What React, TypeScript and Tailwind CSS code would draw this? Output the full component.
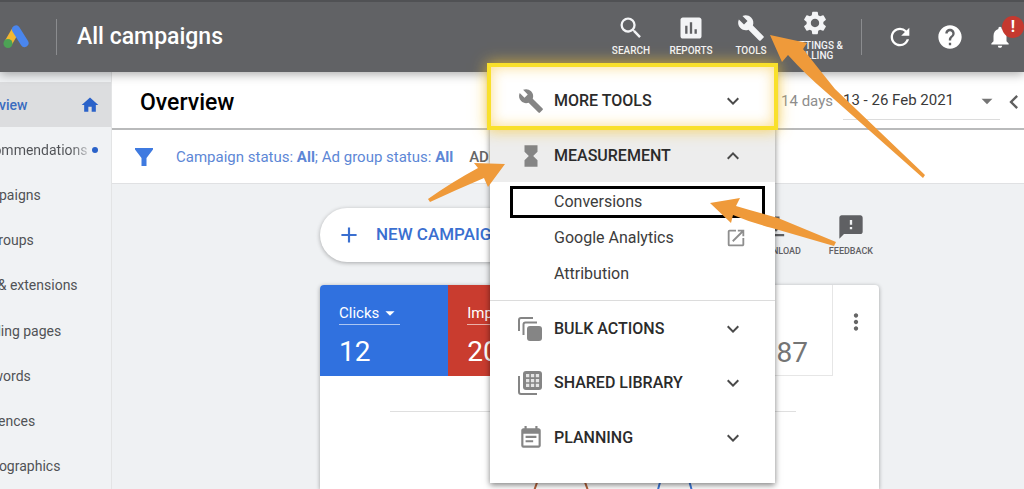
import type { ReactNode } from "react";
import clsx from "clsx";
import {
  MdAdd,
  MdArrowDropDown,
  MdAssessment,
  MdBuild,
  MdChevronLeft,
  MdEventNote,
  MdExpandLess,
  MdExpandMore,
  MdFeedback,
  MdFileDownload,
  MdHelp,
  MdHome,
  MdHourglassFull,
  MdMoreVert,
  MdNotifications,
  MdOpenInNew,
  MdRefresh,
  MdSearch,
  MdSettings,
} from "react-icons/md";

const NAV_ITEMS = [
  "Overview",
  "Recommendations",
  "Campaigns",
  "Ad groups",
  "Ads & extensions",
  "Landing pages",
  "Keywords",
  "Audiences",
  "Demographics",
];

function AdsLogo() {
  return (
    <svg width="27" height="26" viewBox="0 0 27 26" fill="none">
      <path d="M5.500 18.500L12.500 6.500" stroke="#f2b731" strokeWidth="8" />
      <path
        d="M13 5.500L21.500 19"
        stroke="#4a86ee"
        strokeWidth="8"
        strokeLinecap="round"
      />
      <circle cx="5" cy="19.500" r="4.500" fill="#4da255" />
    </svg>
  );
}

function FunnelIcon() {
  return (
    <svg width="18" height="18" viewBox="0 0 18 18" fill="#3f7ae0">
      <path d="M0 0h18v1.500L11.500 10v8h-5v-8L0 1.500z" />
    </svg>
  );
}

function StackIcon() {
  return (
    <svg width="24" height="24" viewBox="0 0 24 24" fill="none">
      <path d="M1 14V3a2 2 0 0 1 2-2h12" stroke="currentColor" strokeWidth="2" />
      <path d="M5.500 18V7.500a2 2 0 0 1 2-2H19" stroke="currentColor" strokeWidth="2" />
      <rect x="9" y="9" width="15" height="15" rx="3" fill="currentColor" />
    </svg>
  );
}

function LibraryIcon() {
  return (
    <svg width="24" height="24" viewBox="0 0 24 24" fill="none">
      <path d="M1 5v16a2 2 0 0 0 2 2h16" stroke="currentColor" strokeWidth="2" />
      <rect x="5" y="0" width="19" height="19" rx="3" fill="currentColor" />
      <path
        d="M8 3h3.300v3.300H8zM12.900 3h3.300v3.300h-3.300zM17.800 3h3.300v3.300h-3.300zM8 7.900h3.300v3.300H8zM12.900 7.900h3.300v3.300h-3.300zM17.800 7.900h3.300v3.300h-3.300zM8 12.800h3.300v3.300H8zM12.900 12.800h3.300v3.300h-3.300zM17.800 12.800h3.300v3.300h-3.300z"
        fill="#e4e4e4"
      />
    </svg>
  );
}

interface HeaderToolProps {
  icon: ReactNode;
  label: string;
  className?: string;
}

function HeaderTool({ icon, label, className }: HeaderToolProps) {
  return (
    <button
      className={clsx(
        "flex flex-col items-center gap-1 pb-1 text-[10px] leading-[10px] font-medium text-gray-100",
        className,
      )}
    >
      {icon}
      {label}
    </button>
  );
}

function Header() {
  return (
    <header className="relative z-10 flex h-[72px] items-center border-t-2 border-[#505154] bg-[#616265] text-white shadow-[0_2px_10px_rgba(0,0,0,0.35)]">
      <a href="#home" aria-label="Home" className="ml-[3px]">
        <AdsLogo />
      </a>
      <span className="ml-[26px] h-9 w-px bg-[#8b8c8f]" />
      <h1 className="ml-5 text-[23px] font-medium">All campaigns</h1>

      <div className="ml-auto flex h-full items-center">
        <HeaderTool className="w-[60px]" icon={<MdSearch size={28} />} label="SEARCH" />
        <HeaderTool className="w-[60px]" icon={<MdAssessment size={28} />} label="REPORTS" />
        <HeaderTool className="w-[60px]" icon={<MdBuild size={28} />} label="TOOLS" />
        <HeaderTool
          className="w-[68px] px-1"
          icon={<MdSettings size={28} />}
          label="SETTINGS & BILLING"
        />
        <span className="mr-[14px] ml-3 h-9 w-px bg-[#8b8c8f]" />
        <button aria-label="Refresh" className="flex w-12 justify-center">
          <MdRefresh size={28} />
        </button>
        <button aria-label="Help" className="flex w-[52px] justify-center">
          <MdHelp size={28} />
        </button>
        <button aria-label="Notifications" className="relative flex w-12 justify-center">
          <MdNotifications size={26} />
          <span className="absolute -top-2 right-0 flex size-[22px] items-center justify-center rounded-full bg-[#c5392f] text-base font-bold">
            !
          </span>
        </button>
      </div>
      <ToolsMenu />
    </header>
  );
}

interface MenuRowProps {
  icon: ReactNode;
  label: string;
  expanded?: boolean;
  className?: string;
}

function MenuRow({ icon, label, expanded, className }: MenuRowProps) {
  return (
    <button
      aria-expanded={!!expanded}
      className={clsx(
        "flex w-full items-center pr-[30px] pl-7 text-left text-base font-medium text-[#2b2b2b]",
        className,
      )}
    >
      <span className="flex w-9 text-[#858585]">{icon}</span>
      {label}
      <span className="ml-auto text-[#4a4a4a]">
        {expanded ? <MdExpandLess size={24} /> : <MdExpandMore size={24} />}
      </span>
    </button>
  );
}

function ToolsMenu() {
  return (
    <nav
      aria-label="Tools"
      className="absolute top-[63px] right-[249px] w-[285px] bg-white pb-[18px] text-[#3c3c3c] shadow-[0_2px_6px_rgba(0,0,0,0.5)]"
    >
      <div className="relative">
        <MenuRow className="h-[65px] pt-[6px]" icon={<MdBuild size={26} />} label="MORE TOOLS" />
        {/* Glowing frame around the first entry */}
        <span className="pointer-events-none absolute -inset-x-[3px] -top-[2px] bottom-0 border-4 border-[#f9e02b] shadow-[0_0_14px_rgba(250,200,50,0.8),inset_0_0_14px_rgba(250,205,90,0.7)]" />
      </div>
      <MenuRow
        className="h-[52px] bg-[#ededed]"
        icon={<MdHourglassFull size={26} />}
        label="MEASUREMENT"
        expanded
      />
      <ul className="border-b border-[#dcdcdc] pt-1 pb-2 text-base text-[#3c3c3c]">
        <li className="mr-[10px] ml-5 border-[3px] border-black">
          <a href="#conversions" className="block pl-[41px] leading-[26px]">
            Conversions
          </a>
        </li>
        <li className="pt-[2px]">
          <a href="#analytics" className="flex h-9 items-center pr-7 pl-16">
            Google Analytics
            <MdOpenInNew size={22} className="ml-auto text-[#8e8e8e]" />
          </a>
        </li>
        <li>
          <a href="#attribution" className="flex h-9 items-center pl-16">
            Attribution
          </a>
        </li>
      </ul>
      <MenuRow className="h-[55px]" icon={<StackIcon />} label="BULK ACTIONS" />
      <MenuRow className="h-[54px]" icon={<LibraryIcon />} label="SHARED LIBRARY" />
      <MenuRow className="h-[55px]" icon={<MdEventNote size={26} />} label="PLANNING" />
    </nav>
  );
}

function Sidebar() {
  return (
    <aside className="flex w-28 shrink-0 flex-col overflow-hidden border-r border-[#e3e4e5] bg-[#f0f2f4] pt-[10px]">
      <nav className="flex flex-1 flex-col">
        {NAV_ITEMS.map((item, i) => (
          <a
            key={item}
            href={`#${item}`}
            className={clsx(
              "flex flex-1 items-center text-sm whitespace-nowrap",
              i === 0 ? "bg-[#dcdddf] font-medium text-[#3a6cc0]" : "text-[#505256]",
            )}
          >
            <span
              className={clsx(
                "-ml-[30px]",
                i === 1 &&
                  "bg-linear-to-r from-[#505256] from-85% to-[#c4c6c9] bg-clip-text text-transparent",
              )}
            >
              {item}
            </span>
            {i === 0 && <MdHome size={20} className="mr-[11px] ml-auto text-[#2a62c9]" />}
            {i === 1 && <span className="ml-1 size-[6px] rounded-full bg-[#2a62c9]" />}
          </a>
        ))}
      </nav>
    </aside>
  );
}

function TitleBar() {
  return (
    <div className="flex h-[58px] items-center border-b-2 border-[#b9babb] bg-white pt-1 pl-7">
      <h2 className="pt-[3px] text-[23px] font-medium text-black">Overview</h2>
      <div className="-mr-1 ml-auto flex items-center">
        <span className="pb-[2px] text-[15px] text-[#8d8d8d]">Last 14 days</span>
        <button className="ml-[10px] flex h-9 items-center border-b border-[#dcdcdc] pb-[2px] text-[15px] text-[#3a3a3a]">
          13 - 26 Feb 2021
          <MdArrowDropDown size={26} className="ml-5 text-[#757575]" />
        </button>
        <button aria-label="Collapse" className="text-[#5f5f5f]">
          <MdChevronLeft size={28} />
        </button>
      </div>
    </div>
  );
}

function FilterBar() {
  return (
    <div className="flex h-[54px] items-center border-b border-[#e0e1e3] bg-white pt-px pl-[23px] text-[15px] text-[#5d87d6]">
      <FunnelIcon />
      <button className="ml-[23px]">
        Campaign status: <b>All</b>; Ad group status: <b>All</b>
      </button>
      <button className="ml-4 font-medium text-[#666]">ADD FILTER</button>
    </div>
  );
}

function ActionRow() {
  return (
    <div className="flex items-center">
      <button className="flex h-[54px] items-center rounded-full bg-white px-4 pr-8 text-[17px] font-medium text-[#3a6fd0] shadow-[0_1px_4px_rgba(0,0,0,0.3)]">
        <MdAdd size={26} className="mr-[14px]" />
        NEW CAMPAIGN
      </button>
      <div className="ml-auto flex gap-7 text-[9px] leading-3 font-medium text-[#5f6063]">
        <button className="flex flex-col items-center gap-1">
          <MdFileDownload size={28} />
          DOWNLOAD
        </button>
        <button className="mr-[6px] flex flex-col items-center gap-1">
          <MdFeedback size={28} />
          FEEDBACK
        </button>
      </div>
    </div>
  );
}

interface MetricProps {
  name: string;
  value: string;
  className?: string;
}

function Metric({ name, value, className }: MetricProps) {
  return (
    <div className={clsx("pt-[17px] pl-[19px]", className)}>
      <button className="flex items-center border-b border-current/60 text-[15px] leading-[22px]">
        {name}
        <MdArrowDropDown size={28} className="-mr-1 -ml-[3px] h-[22px]" />
      </button>
      <div className="pt-[9px] text-[28px] leading-9">{value}</div>
    </div>
  );
}

function ChartCard() {
  return (
    <section className="flex flex-1 flex-col rounded-t-sm bg-white shadow-[0_1px_4px_rgba(0,0,0,0.35)]">
      <div className="flex h-[91px]">
        <div className="grid flex-1 grid-cols-4">
          <Metric name="Clicks" value="12" className="rounded-tl-sm bg-[#3071df] text-white" />
          <Metric name="Impressions" value="204" className="bg-[#c93c2f] text-white" />
          <div className="col-span-2 flex items-end justify-end border-r border-b border-[#e6e6e6] pr-6 pb-px text-[28px] text-[#757575]">
            2.87
          </div>
        </div>
        <button aria-label="More options" className="flex w-[46px] justify-center pt-6 text-[#666]">
          <MdMoreVert size={26} />
        </button>
      </div>
      <div className="mt-[35px] mr-[83px] ml-[70px] border-t border-[#dfdfdf]" />
      <svg
        viewBox="0 0 407 77"
        className="mr-[83px] ml-[70px] h-[77px]"
        preserveAspectRatio="none"
        fill="none"
        strokeWidth="2"
      >
        <path d="M144 80L154 52L180 40L189 52L199 80" stroke="#b5643c" />
        <path d="M268 80L273 62L286 40L298 62L303 80" stroke="#3f78d8" />
      </svg>
    </section>
  );
}

/** Orange pointers drawn over the page. */
function Arrows() {
  return (
    <svg
      width="1024"
      height="489"
      viewBox="0 0 1024 489"
      className="pointer-events-none absolute top-0 left-0 z-20"
      fill="#ef9a3a"
    >
      <path d="M770 35L807 43L803 49Q818 68 835 89L925 175L923 178L826 92Q806 75 788 55L782 62Z" />
      <path d="M505 164L474 163L478 168Q452 182 428 199L430 202Q458 189 484 178L488 187Z" />
      <path d="M710 203L740 198L736 206Q756 212 778 218L836 242L834 246L772 228Q752 223 733 215L731 223Z" />
    </svg>
  );
}

export default function App() {
  return (
    <div className="relative flex min-h-screen flex-col overflow-hidden bg-[#eff1f3] font-[Roboto,sans-serif]">
      <Header />
      <div className="flex flex-1">
        <Sidebar />
        <main className="flex min-w-0 flex-1 flex-col">
          <TitleBar />
          <FilterBar />
          <div className="mr-[145px] ml-52 flex flex-1 flex-col gap-[23px] pt-6">
            <ActionRow />
            <ChartCard />
          </div>
        </main>
      </div>
      <Arrows />
    </div>
  );
}
